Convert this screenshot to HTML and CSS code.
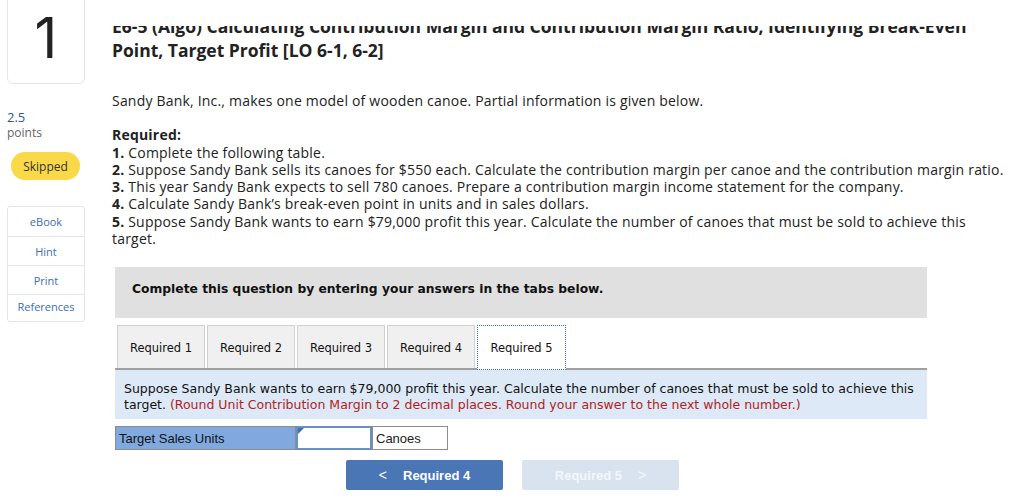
FILE: index.html
```html
<!DOCTYPE html>
<html>
<head>
<meta charset="utf-8">
<link rel="stylesheet" href="styles.css">
</head>
<body>
<div class="page">
  <aside class="side">
    <div class="qnum">1</div>
    <div class="pts">
      <div class="pts-val">2.5</div>
      <div class="pts-lbl">points</div>
    </div>
    <div class="skipped">Skipped</div>
    <ul class="links">
      <li>eBook</li>
      <li>Hint</li>
      <li>Print</li>
      <li>References</li>
    </ul>
  </aside>
  <main class="main">
    <div class="title-clip">
      <h1 class="title">E6-5 (Algo) Calculating Contribution Margin and Contribution Margin Ratio, Identifying Break-Even Point, Target Profit [LO 6-1, 6-2]</h1>
    </div>
    <p class="intro">Sandy Bank, Inc., makes one model of wooden canoe. Partial information is given below.</p>
    <div class="req">
      <div class="req-h">Required:</div>
      <div><b>1.</b> Complete the following table.</div>
      <div><b>2.</b> Suppose Sandy Bank sells its canoes for $550 each. Calculate the contribution margin per canoe and the contribution margin ratio.</div>
      <div><b>3.</b> This year Sandy Bank expects to sell 780 canoes. Prepare a contribution margin income statement for the company.</div>
      <div><b>4.</b> Calculate Sandy Bank’s break-even point in units and in sales dollars.</div>
      <div><b>5.</b> Suppose Sandy Bank wants to earn $79,000 profit this year. Calculate the number of canoes that must be sold to achieve this target.</div>
    </div>
    <div class="work">
      <div class="instr">Complete this question by entering your answers in the tabs below.</div>
      <div class="tabs">
        <div class="tab">Required 1</div>
        <div class="tab">Required 2</div>
        <div class="tab">Required 3</div>
        <div class="tab">Required 4</div>
        <div class="tab active">Required 5</div>
      </div>
      <div class="panel">Suppose Sandy Bank wants to earn $79,000 profit this year. Calculate the number of canoes that must be sold to achieve this target. <span class="hint">(Round Unit Contribution Margin to 2 decimal places. Round your answer to the next whole number.)</span></div>
      <div class="ans">
        <div class="cell lbl">Target Sales Units</div>
        <div class="cell inp"><span class="flag"></span></div>
        <div class="cell unit">Canoes</div>
      </div>
      <div class="nav">
        <div class="btn prev"><span class="chev">&lt;</span>Required 4</div>
        <div class="btn next">Required 5<span class="chev r">&gt;</span></div>
      </div>
    </div>
  </main>
</div>
</body>
</html>
```
FILE: styles.css
```css
* { box-sizing: border-box; }
html, body { margin: 0; padding: 0; background: #fff; overflow: hidden; }
body { font-family: "Open Sans", Lato, sans-serif; color: #222; }
.page { display: flex; height: 502px; }

.side { width: 112px; padding-left: 7px; flex: none; }
.qnum {
  width: 78px; height: 92px; margin-top: -8px;
  border: 1px solid #e6e6e6; border-radius: 6px;
  display: flex; align-items: center; justify-content: center;
  font-family: Inter, Lato, sans-serif; font-size: 56px; font-weight: 400; color: #222;
}
.pts { margin-top: 25px; }
.pts-val { font-size: 13px; color: #2b5797; line-height: 16px; }
.pts-lbl { font-size: 12px; color: #666; line-height: 16px; }
.skipped {
  margin: 11px 0 0 4px; width: 69px; height: 28px; border-radius: 14px;
  background: #f9d948; color: #333; font-size: 12px;
  display: flex; align-items: center; justify-content: center;
}
.links {
  list-style: none; margin: 26px 0 0; padding: 0; width: 78px;
  border: 1px solid #e6e6e6; border-radius: 3px;
}
.links li {
  font-size: 11px; color: #3d6db5; text-align: center;
  height: 29px; line-height: 29px; border-top: 1px solid #e6e6e6;
}
.links li:first-child { border-top: 0; }
.links li:last-child { height: 27px; line-height: 24px; }

.main { flex: 1; padding-right: 18px; }
.title-clip { margin-top: 26px; overflow: hidden; }
.title {
  margin: -12px 0 0; max-width: 870px; font-size: 17.5px; line-height: 24px; font-weight: 700; color: #222;
}
.intro { margin: 30px 0 0; font-size: 14px; letter-spacing: 0.2px; line-height: 17.3px; }
.req { margin-top: 17px; font-size: 14px; letter-spacing: 0.2px; line-height: 17.3px; }
.req-h { font-weight: 700; }

.work { margin: 20px 0 0 3px; width: 812px; font-family: "DejaVu Sans", Verdana, sans-serif; }
.instr {
  background: #e0e0e0; height: 51px; padding: 0 0 8px 17px;
  display: flex; align-items: center;
  font-size: 12.3px; font-weight: 700; color: #111;
}
.tabs {
  display: flex; gap: 2px; margin-top: 7px; padding-left: 2px;
  border-bottom: 2px solid #a0a0a0; height: 45px;
}
.tab {
  width: 88px; height: 43px; padding-top: 2px; background: #f0f0f0; border: 1px solid #d0d0d0; border-bottom: 0;
  font-size: 11.5px; color: #111; display: flex; align-items: center; justify-content: center;
}
.tab.active { background: #fff; border: 1px dotted #3a6fb5; width: 89px; height: 45px; padding-top: 0; margin-bottom: -2px; }
.panel {
  background: #dde9f6; padding: 11px 9px 6px; font-size: 12.5px; line-height: 16px; color: #111;
}
.hint { color: #b22222; }
.ans { display: flex; margin-top: 7px; height: 24px; font-family: "Liberation Sans", Arial, sans-serif; font-size: 13px; }
.cell { height: 24px; display: flex; align-items: center; padding-left: 3px; }
.lbl { width: 181px; background: #80aadf; border: 1px solid #8c8c8c; color: #111; }
.inp { width: 76px; background: #fff; border: 2px solid #6a8fc2; position: relative; }
.flag { position: absolute; left: 0; top: 0; width: 0; height: 0; border-top: 6px solid #3d6db5; border-right: 6px solid transparent; }
.unit { width: 76px; background: #fff; border: 1px solid #8c8c8c; }
.nav { display: flex; gap: 19px; margin-top: 10px; padding-left: 231px; font-family: "Liberation Sans", Arial, sans-serif; }
.btn {
  width: 157px; height: 30px; border-radius: 2px; color: #fff; font-size: 13px; font-weight: 700;
  display: flex; align-items: center; justify-content: center;
}
.prev { background: #4a76b6; }
.next { background: #d9e3ef; color: #f4f7fb; }
.chev { font-weight: 400; font-size: 14px; margin-right: 16px; }
.chev.r { margin: 0 0 0 16px; }
```
